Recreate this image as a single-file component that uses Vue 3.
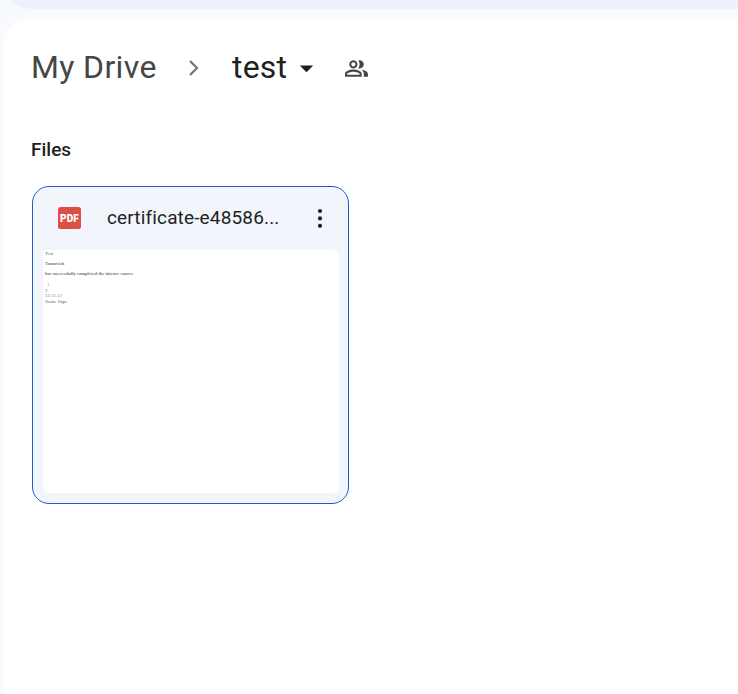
<script setup>
const fileName = 'certificate-e48586...'
</script>

<template>
  <div class="page">
    <div class="search"></div>
    <main class="panel">
      <nav class="crumbs">
        <span class="root">My Drive</span>
        <svg class="chevron" width="12" height="18" viewBox="0 0 12 18"><path d="M2 2l7 7-7 7" fill="none" stroke="#747775" stroke-width="2.3" /></svg>
        <span class="current">test</span>
        <svg class="caret" width="15" height="8" viewBox="0 0 15 8"><path d="M.8.6h13.4L7.5 7.3z" fill="#1f1f1f" /></svg>
        <svg class="people" width="25" height="25" viewBox="0 0 24 24" fill="#444746">
          <path d="M16.67 13.13C18.04 14.06 19 15.32 19 17v3h4v-3c0-2.18-3.57-3.47-6.33-3.87zM15 12c2.21 0 4-1.79 4-4s-1.79-4-4-4c-.47 0-.91.1-1.33.24C14.5 5.27 15 6.58 15 8s-.5 2.73-1.33 3.76c.42.14.86.24 1.33.24zM9 12c2.21 0 4-1.79 4-4s-1.79-4-4-4-4 1.79-4 4 1.79 4 4 4zm0-6c1.1 0 2 .9 2 2s-.9 2-2 2-2-.9-2-2 .9-2 2-2zM9 13c-2.67 0-8 1.34-8 4v3h16v-3c0-2.66-5.33-4-8-4zm6 5H3v-.99C3.2 16.29 6.3 15 9 15s5.8 1.29 6 2v1z" />
        </svg>
      </nav>
      <h2 class="heading">Files</h2>
      <article class="card">
        <header class="bar">
          <span class="pdf">PDF</span>
          <span class="name">{{ fileName }}</span>
          <svg class="more" width="6" height="20" viewBox="0 0 6 20" fill="#1f1f1f"><circle cx="3" cy="3" r="2.1" /><circle cx="3" cy="10.4" r="2.1" /><circle cx="3" cy="17.8" r="2.1" /></svg>
        </header>
        <div class="preview">
          <p class="line first">Test</p>
          <p class="line bold second">Tomovich</p>
          <p class="line bold third">has successfully completed the intense course</p>
          <p class="line pale">1</p>
          <p class="line">2</p>
          <p class="line date">12.11.11</p>
          <p class="line">Some Sign</p>
        </div>
      </article>
    </main>
  </div>
</template>

<style>
body { margin: 0; background: #f8fafd; overflow: hidden; }
</style>

<style scoped>
.page { box-sizing: border-box; height: 694px; overflow: hidden; background: #f8fafd; font-family: Roboto, sans-serif; }
.search { height: 9px; margin-left: 12px; background: #ecf1fa; border-bottom-left-radius: 24px 10px; }
.panel { box-sizing: border-box; height: 674px; margin: 11px 0 0 4px; padding: 26px 0 0 28px; background: #fff; border-top-left-radius: 21px; }
.crumbs { display: flex; align-items: center; height: 42px; line-height: 42px; font-size: 32px; white-space: nowrap; }
.root { width: 157px; margin-left: -1px; color: #444746; letter-spacing: .35px; }
.chevron { margin-top: 2px; }
.current { width: 67px; margin-left: 32px; color: #1f1f1f; letter-spacing: .2px; }
.caret { margin-top: 3px; }
.people { margin: 2px 0 0 30px; }
.heading { margin: 50px 0 0 -1px; height: 24px; line-height: 24px; font-size: 19px; font-weight: 500; color: #1f1f1f; }
.card { box-sizing: border-box; width: 317px; height: 318px; margin-top: 24px; padding: 0 9px 0 10px; border: 1px solid #2456d3; border-radius: 17px; background: #f2f6fc; }
.bar { display: flex; align-items: center; height: 62px; padding: 0 0 1px 15px; }
.pdf { width: 23px; height: 22px; line-height: 23px; border-radius: 2.5px; background: #db5044; color: #fff; font-size: 10px; font-weight: 900; text-align: center; letter-spacing: .2px; }
.name { width: 204px; margin-left: 26px; font-size: 19px; line-height: 26px; color: #1f1f1f; letter-spacing: .15px; white-space: nowrap; }
.more { margin-left: 6px; }
.preview { box-sizing: border-box; width: 296px; height: 243px; padding: 1px 2px 0; border-radius: 2px 6px 6px 6px; background: #fff; font-family: "Liberation Serif", serif; }
.line { margin: 0; height: 5.6px; line-height: 5.6px; font-size: 5px; color: #666; white-space: nowrap; }
.bold { font-weight: 700; font-size: 4.6px; color: #777; }
.second, .third { margin-top: 4.4px; }
.pale { margin: 5.5px 0 0 2px; color: #999; }
.date { color: #777; }
</style>
